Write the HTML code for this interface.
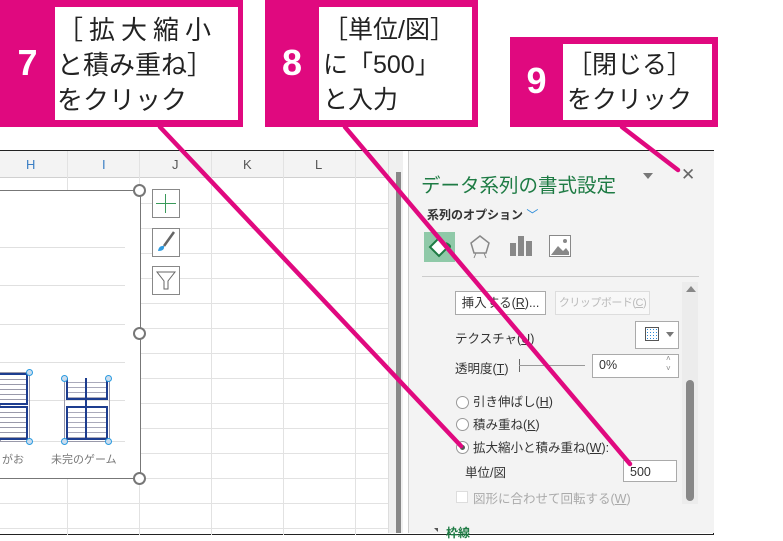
<!DOCTYPE html>
<html><head><meta charset="utf-8"><style>
body{margin:0;width:783px;height:535px;background:#fff;position:relative;overflow:hidden;font-family:"Liberation Sans","Noto Sans CJK JP",sans-serif}
.a{position:absolute}
.jp{font-family:"Liberation Sans","Noto Sans CJK JP",sans-serif}
.pink{background:#e0097f}
.wb{background:#fff;color:#222;font-size:26px;line-height:35px;white-space:nowrap;overflow:hidden}
.num{color:#fff;font-size:36px;font-weight:bold;text-align:center}
.vl{position:absolute;top:178px;bottom:0;width:1px;background:#e2e2e2}
.hl{position:absolute;left:0;width:388px;height:1px;background:#e2e2e2}
.p{font-size:12.5px;color:#333;position:absolute;white-space:nowrap}
</style></head><body>
<div class="a" style="left:0;top:150px;width:713px;height:383px;border:1px solid #222;border-left:none;background:#fff"></div>
<div class="a" style="left:0;top:151px;width:388px;height:26px;background:#f3f3f3;border-bottom:1px solid #d0d0d0"></div>
<div class="a jp" style="left:0;top:157px;width:388px;font-size:13px;color:#3b7fc4">
<span class="a" style="left:26px">H</span><span class="a" style="left:102px">I</span><span class="a" style="left:172px;color:#555">J</span><span class="a" style="left:243px;color:#555">K</span><span class="a" style="left:315px;color:#555">L</span></div>
<div class="vl" style="left:67px;top:151px"></div><div class="vl" style="left:139px;top:151px"></div><div class="vl" style="left:211px;top:151px"></div><div class="vl" style="left:283px;top:151px"></div><div class="vl" style="left:355px;top:151px"></div>
<div class="hl" style="top:203px"></div><div class="hl" style="top:228px"></div><div class="hl" style="top:253px"></div><div class="hl" style="top:278px"></div><div class="hl" style="top:303px"></div><div class="hl" style="top:328px"></div><div class="hl" style="top:353px"></div><div class="hl" style="top:378px"></div><div class="hl" style="top:403px"></div><div class="hl" style="top:428px"></div><div class="hl" style="top:453px"></div><div class="hl" style="top:478px"></div><div class="hl" style="top:503px"></div><div class="hl" style="top:528px"></div>
<div class="a" style="left:-2px;top:190px;width:141px;height:287px;background:#fff;border:1px solid #777"></div>
<div class="a" style="left:0;top:247px;width:125px;height:1px;background:#e0e0e0"></div>
<div class="a" style="left:0;top:285px;width:125px;height:1px;background:#e0e0e0"></div>
<div class="a" style="left:0;top:324px;width:125px;height:1px;background:#e0e0e0"></div>
<div class="a" style="left:0;top:362px;width:125px;height:1px;background:#e0e0e0"></div>
<div class="a" style="left:0;top:400px;width:125px;height:1px;background:#e0e0e0"></div>
<div class="a" style="left:0;top:441px;width:125px;height:1px;background:#e0e0e0"></div>
<div class="a" style="left:133px;top:184px;width:9px;height:9px;border:2px solid #777;border-radius:50%;background:#fff"></div>
<div class="a" style="left:133px;top:327px;width:9px;height:9px;border:2px solid #777;border-radius:50%;background:#fff"></div>
<div class="a" style="left:133px;top:472px;width:9px;height:9px;border:2px solid #777;border-radius:50%;background:#fff"></div>
<div class="a" style="left:0;top:372px;width:28px;height:68px;border:1px solid #99a"></div>
<div class="a" style="left:0;top:373px;width:26px;height:28px;border:2px solid #1d3d8f;border-left:none;background:repeating-linear-gradient(#fff 0 4px,#99a 4px 5px)"></div>
<div class="a" style="left:0;top:406px;width:26px;height:30px;border:2px solid #1d3d8f;border-left:none;background:repeating-linear-gradient(#fff 0 4px,#99a 4px 5px)"></div>
<div class="a" style="left:64px;top:378px;width:44px;height:62px;border:1px solid #99a"></div>
<div class="a" style="left:66px;top:378px;width:38px;height:20px;border:2px solid #1d3d8f;border-top:none;background:repeating-linear-gradient(#fff 0 4px,#aab 4px 5px)"></div>
<div class="a" style="left:66px;top:406px;width:38px;height:30px;border:2px solid #1d3d8f;background:repeating-linear-gradient(#fff 0 4px,#aab 4px 5px)"></div>
<div class="a" style="left:85px;top:378px;width:2px;height:60px;background:#1d3d8f"></div>
<div class="a" style="left:26px;top:369px;width:5px;height:5px;border:1px solid #2a9be0;border-radius:50%;background:#cde"></div>
<div class="a" style="left:26px;top:438px;width:5px;height:5px;border:1px solid #2a9be0;border-radius:50%;background:#cde"></div>
<div class="a" style="left:61px;top:375px;width:5px;height:5px;border:1px solid #2a9be0;border-radius:50%;background:#cde"></div>
<div class="a" style="left:105px;top:375px;width:5px;height:5px;border:1px solid #2a9be0;border-radius:50%;background:#cde"></div>
<div class="a" style="left:61px;top:438px;width:5px;height:5px;border:1px solid #2a9be0;border-radius:50%;background:#cde"></div>
<div class="a" style="left:105px;top:438px;width:5px;height:5px;border:1px solid #2a9be0;border-radius:50%;background:#cde"></div>
<div class="a" style="left:2px;top:451px;font-size:11px;color:#777">がお</div>
<div class="a" style="left:51px;top:451px;font-size:11px;color:#777">未完のゲーム</div>
<div class="a" style="left:152px;top:189px;width:26px;height:27px;border:1px solid #888;background:#fff"><div class="a" style="left:12px;top:4px;width:1px;height:19px;background:#3a9a5a"></div><div class="a" style="left:3px;top:13px;width:20px;height:1px;background:#3a9a5a"></div></div>
<div class="a" style="left:152px;top:228px;width:26px;height:27px;border:1px solid #888;background:#fff"><svg width="26" height="27"><path d="M21 3 L11 17" stroke="#666" stroke-width="2.5"/><path d="M5 22 Q6 16 11 17 Q12 22 5 22Z" fill="#2f9be0"/></svg></div>
<div class="a" style="left:152px;top:266px;width:26px;height:27px;border:1px solid #888;background:#fff"><svg width="26" height="27"><path d="M4 5 H22 L15 14 V22 H11 V14Z" fill="none" stroke="#666"/></svg></div>
<div class="a" style="left:388px;top:151px;width:14px;height:382px;background:#f0f0f0;border-left:1px solid #ddd"></div>
<div class="a" style="left:396px;top:172px;width:5px;height:361px;background:#888"></div>
<div class="a" style="left:408px;top:151px;width:305px;height:382px;background:#f3f3f3;border-left:1px solid #ccc"></div>
<div class="a" style="left:421px;top:169px;font-size:19.5px;color:#1e7b44;white-space:nowrap">データ系列の書式設定</div>
<div class="a" style="left:643px;top:173px;border:5px solid transparent;border-top:6px solid #777"></div>
<div class="a" style="left:681px;top:165px;font-size:17px;color:#666">✕</div>
<div class="a" style="left:427px;top:206px;font-size:12px;color:#333;font-weight:bold;white-space:nowrap">系列のオプション <span style="color:#2a8ad8;font-weight:normal">﹀</span></div>
<div class="a" style="left:424px;top:232px;width:31px;height:30px;background:#8fc9a8"></div>
<svg class="a" style="left:424px;top:232px" width="140" height="32"><path d="M15 6 L24 15 L15 24 L6 15Z" fill="#fff" stroke="#1e7b44" stroke-width="2"/><path d="M22 10 Q31 14 24 18" fill="#1e7b44"/>
<path d="M56 4 L65 11 L62 21 L50 21 L47 11Z" fill="none" stroke="#888" stroke-width="1.5"/><path d="M52 21 L50 26 M60 21 L62 26" stroke="#888"/>
<rect x="86" y="11" width="6" height="13" fill="#888"/><rect x="94" y="4" width="6" height="20" fill="#888"/><rect x="102" y="9" width="6" height="15" fill="#888"/></svg>
<svg class="a" style="left:549px;top:235px" width="22" height="22"><rect x="0.5" y="0.5" width="21" height="21" fill="#fff" stroke="#888"/><path d="M2 20 L9 11 L14 16 L17 13 L20 17 V20Z" fill="#888"/><circle cx="16" cy="6" r="2" fill="#888"/></svg>
<div class="a" style="left:422px;top:276px;width:277px;height:1px;background:#ccc"></div>
<div class="a" style="left:682px;top:282px;width:16px;height:222px;background:#ececec"></div>
<div class="a" style="left:686px;top:286px;border:5px solid transparent;border-bottom:6px solid #888;border-top:none"></div>
<div class="a" style="left:686px;top:380px;width:8px;height:121px;border-radius:4px;background:#888"></div>
<div class="a" style="left:455px;top:291px;width:89px;height:22px;border:1px solid #aaa;background:#fff;font-size:12.5px;color:#333;text-align:center;line-height:22px;white-space:nowrap">挿入する(<u>R</u>)...</div>
<div class="a" style="left:555px;top:291px;width:93px;height:22px;border:1px solid #ddd;background:#f8f8f8;font-size:11px;color:#bbb;text-align:center;line-height:22px;white-space:nowrap;letter-spacing:-0.5px">クリップボード(<u>C</u>)</div>
<div class="p" style="left:455px;top:328px">テクスチャ(<u>U</u>)</div>
<div class="a" style="left:635px;top:321px;width:42px;height:26px;border:1px solid #aaa;background:#fff"><div class="a" style="left:9px;top:5px;width:12px;height:12px;border:1px solid #555;background:radial-gradient(#2a8ad8 30%,transparent 35%) 0 0/3px 3px"></div><div class="a" style="left:30px;top:10px;border:4px solid transparent;border-top:5px solid #777"></div></div>
<div class="p" style="left:455px;top:358px">透明度(<u>T</u>)</div>
<div class="a" style="left:519px;top:359px;width:1px;height:13px;background:#666"></div>
<div class="a" style="left:519px;top:365px;width:66px;height:1px;background:#999"></div>
<div class="a" style="left:592px;top:354px;width:85px;height:22px;border:1px solid #aaa;background:#fff"><span class="a" style="left:6px;top:3px;font-size:12.5px;color:#333">0%</span><span class="a" style="left:73px;top:-1px;font-size:8px;color:#888;line-height:10px">˄<br>˅</span></div>
<div class="a" style="left:456px;top:396px;width:11px;height:11px;border:1px solid #999;border-radius:50%;background:#fff"></div>
<div class="p" style="left:473px;top:391px">引き伸ばし(<u>H</u>)</div>
<div class="a" style="left:456px;top:418px;width:11px;height:11px;border:1px solid #999;border-radius:50%;background:#fff"></div>
<div class="p" style="left:473px;top:414px">積み重ね(<u>K</u>)</div>
<div class="a" style="left:456px;top:441px;width:11px;height:11px;border:1px solid #999;border-radius:50%;background:#fff"><div class="a" style="left:3px;top:3px;width:5px;height:5px;border-radius:50%;background:#555"></div></div>
<div class="p" style="left:473px;top:437px">拡大縮小と積み重ね(<u>W</u>):</div>
<div class="p" style="left:465px;top:462px">単位/図</div>
<div class="a" style="left:623px;top:460px;width:54px;height:22px;border:1px solid #aaa;background:#fff;font-size:12.5px;color:#333;line-height:22px;padding-left:6px;box-sizing:border-box">500</div>
<div class="a" style="left:456px;top:491px;width:10px;height:10px;border:1px solid #ddd;background:#fff"></div>
<div class="p" style="left:473px;top:488px;color:#aaa">図形に合わせて回転する(<u>W</u>)</div>
<div class="a" style="left:430px;top:528px;border:4px solid transparent;border-right:4px solid #555;border-top:none"></div>
<div class="a" style="left:446px;top:524px;font-size:12px;color:#1e7b44;font-weight:bold">枠線</div>
<div class="a pink" style="left:0;top:0;width:243px;height:127px"></div>
<div class="a num" style="left:0;top:42px;width:55px">7</div>
<div class="a wb" style="left:55px;top:7px;width:183px;height:113px;padding:6px 0 0 2px;box-sizing:border-box;line-height:35px"><span style="letter-spacing:6px">［拡大縮小</span><br>と積み重ね］<br>をクリック</div>
<div class="a pink" style="left:265px;top:0;width:213px;height:127px"></div>
<div class="a num" style="left:265px;top:42px;width:54px">8</div>
<div class="a wb" style="left:319px;top:7px;width:153px;height:113px;padding:6px 0 0 4px;box-sizing:border-box;font-size:25px;letter-spacing:0">［単位/図］<br>に「500」<br>と入力</div>
<div class="a pink" style="left:510px;top:37px;width:208px;height:90px"></div>
<div class="a num" style="left:510px;top:60px;width:53px">9</div>
<div class="a wb" style="left:563px;top:44px;width:149px;height:76px;padding:4px 0 0 4px;box-sizing:border-box;font-size:25px">［閉じる］<br>をクリック</div>
<svg class="a" style="left:0;top:0" width="783" height="535"><g stroke="#e0097f" stroke-width="4.5" stroke-linecap="round"><line x1="160" y1="127" x2="461" y2="446"/><line x1="345" y1="127" x2="630" y2="464"/><line x1="622" y1="127" x2="678" y2="170"/></g></svg>
</body></html>
